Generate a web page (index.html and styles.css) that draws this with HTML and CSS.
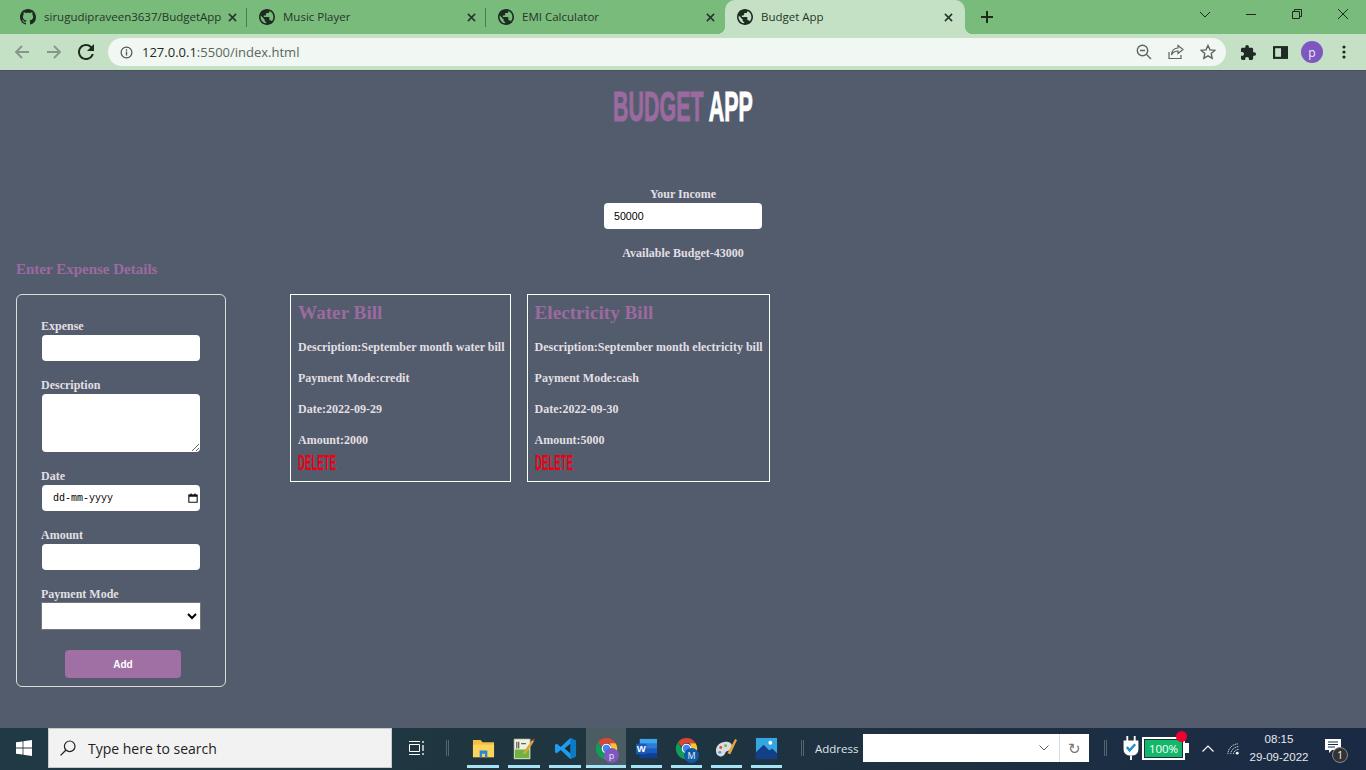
FILE: index.html
```html
<!DOCTYPE html>
<html lang="en">
<head>
  <meta charset="UTF-8" />
  <title>Budget App</title>
  <link rel="stylesheet" href="styles.css">
</head>
<body>
  <svg class="defs" width="0" height="0">
    <symbol id="globe" viewBox="2 2 20 20"><path d="M12 2C6.48 2 2 6.48 2 12s4.48 10 10 10 10-4.48 10-10S17.52 2 12 2zm-1 17.93c-3.95-.49-7-3.85-7-7.93 0-.62.08-1.21.21-1.79L9 15v1c0 1.1.9 2 2 2v1.93zm6.9-2.54c-.26-.81-1-1.39-1.9-1.39h-1v-3c0-.55-.45-1-1-1H8v-2h2c.55 0 1-.45 1-1V7h2c1.1 0 2-.9 2-2v-.41c2.93 1.19 5 4.06 5 7.41 0 2.08-.8 3.97-2.1 5.39z"/></symbol>
    <symbol id="close" viewBox="0 0 10 10"><path d="M1 1l8 8M9 1L1 9" stroke="#26352a" stroke-width="1.7" fill="none"/></symbol>
    <symbol id="chrome" viewBox="0 0 24 24">
      <path d="M12 1a11 11 0 0 1 9.53 5.5H12a5.5 5.5 0 0 0-5.2 3.7L3.2 5.3A11 11 0 0 1 12 1z" fill="#db4437"/>
      <path d="M3.2 5.3l4.6 8a5.5 5.5 0 0 0 5.7 4l-3.7 5.6A11 11 0 0 1 3.2 5.3z" fill="#0f9d58"/>
      <path d="M21.53 6.5A11 11 0 0 1 9.8 22.9l4.7-8.1a5.5 5.5 0 0 0 .6-8.3z" fill="#fbc02d"/>
      <circle cx="12" cy="12" r="4.4" fill="#4285f4" stroke="#fff" stroke-width="1.2"/>
    </symbol>
  </svg>

  <header class="tabstrip">
    <div class="tab">
      <svg class="tab-icon" viewBox="0 0 16 16"><path d="M8 0C3.58 0 0 3.58 0 8c0 3.54 2.29 6.53 5.47 7.59.4.07.55-.17.55-.38 0-.19-.01-.82-.01-1.49-2.01.37-2.53-.49-2.69-.94-.09-.23-.48-.94-.82-1.13-.28-.15-.68-.52-.01-.53.63-.01 1.08.58 1.23.82.72 1.21 1.87.87 2.33.66.07-.52.28-.87.51-1.07-1.78-.2-3.64-.89-3.64-3.95 0-.87.31-1.59.82-2.15-.08-.2-.36-1.02.08-2.12 0 0 .67-.21 2.2.82.64-.18 1.32-.27 2-.27.68 0 1.36.09 2 .27 1.53-1.04 2.2-.82 2.2-.82.44 1.1.16 1.92.08 2.12.51.56.82 1.27.82 2.15 0 3.07-1.87 3.75-3.65 3.95.29.25.54.73.54 1.48 0 1.07-.01 1.93-.01 2.2 0 .21.15.46.55.38A8.013 8.013 0 0016 8c0-4.42-3.58-8-8-8z"/></svg>
      <span class="tab-title">sirugudipraveen3637/BudgetApp</span>
      <svg class="tab-close"><use href="#close"/></svg>
    </div>
    <div class="tab">
      <svg class="tab-icon"><use href="#globe"/></svg>
      <span class="tab-title">Music Player</span>
      <svg class="tab-close"><use href="#close"/></svg>
    </div>
    <div class="tab tab-last">
      <svg class="tab-icon"><use href="#globe"/></svg>
      <span class="tab-title">EMI Calculator</span>
      <svg class="tab-close"><use href="#close"/></svg>
    </div>
    <div class="tab tab-active">
      <svg class="tab-icon"><use href="#globe"/></svg>
      <span class="tab-title">Budget App</span>
      <svg class="tab-close"><use href="#close"/></svg>
    </div>
    <svg class="new-tab" viewBox="0 0 12 12"><path d="M6 0v12M0 6h12" stroke="#1d2a20" stroke-width="2"/></svg>
    <div class="window-controls">
      <svg viewBox="0 0 46 16"><path d="M18 6l5 5 5-5" stroke="#1d2a20" fill="none"/></svg>
      <svg viewBox="0 0 46 16"><path d="M18 8.500h10" stroke="#1d2a20"/></svg>
      <svg viewBox="0 0 46 16"><path d="M18.500 5.500h7v7h-7zM20.500 5.500v-2h7v7h-2" stroke="#1d2a20" fill="none"/></svg>
      <svg viewBox="0 0 46 16"><path d="M18 3l10 10M28 3L18 13" stroke="#1d2a20" fill="none"/></svg>
    </div>
  </header>

  <nav class="toolbar">
    <svg class="tool" viewBox="0 0 16 16"><path d="M15 8H2M8 2L2 8l6 6" stroke="#86948a" stroke-width="1.8" fill="none"/></svg>
    <svg class="tool" viewBox="0 0 16 16"><path d="M1 8h13M8 2l6 6-6 6" stroke="#86948a" stroke-width="1.8" fill="none"/></svg>
    <svg class="tool tool-reload" viewBox="4 4 16 16"><path d="M17.65 6.35A7.958 7.958 0 0012 4c-4.42 0-7.99 3.58-7.99 8s3.57 8 7.99 8c3.73 0 6.84-2.55 7.73-6h-2.08A5.99 5.99 0 0112 18c-3.31 0-6-2.69-6-6s2.69-6 6-6c1.66 0 3.14.69 4.22 1.78L13 11h7V4l-2.35 2.35z" fill="#1f2a22"/></svg>
    <div class="omnibox">
      <svg class="info" viewBox="0 0 14 14"><circle cx="7" cy="7" r="5.8" stroke="#4c5650" stroke-width="1.3" fill="none"/><path d="M7 6v4.2M7 3.6v1.4" stroke="#4c5650" stroke-width="1.4"/></svg>
      <span class="url"><span class="url-host">127.0.0.1</span>:5500/index.html</span>
      <svg class="omni-icon" viewBox="0 0 16 16"><circle cx="6.5" cy="6.5" r="5.2" stroke="#5c6660" stroke-width="1.4" fill="none"/><path d="M4 6.5h5M10.5 10.5l4.5 4.5" stroke="#5c6660" stroke-width="1.4"/></svg>
      <svg class="omni-icon" viewBox="0 0 16 16"><path d="M1 8v6.5h12V11" stroke="#5c6660" stroke-width="1.2" fill="none"/><path d="M10 1.5l5 4-5 4V7C7 7 5 8 3.5 11 3.8 7 6 4 10 4z" stroke="#5c6660" stroke-width="1.2" fill="none"/></svg>
      <svg class="omni-icon" viewBox="0 0 16 16"><path d="M8 1.5l2 4.4 4.8.5-3.6 3.2 1 4.7L8 11.900l-4.200 2.400 1-4.700L1.200 6.400l4.800-.5z" stroke="#5c6660" stroke-width="1.4" fill="none"/></svg>
    </div>
    <svg class="tool-right" viewBox="2 1 21 21"><path d="M20.500 11H19V7c0-1.100-.900-2-2-2h-4V3.500C13 2.120 11.880 1 10.500 1S8 2.120 8 3.500V5H4c-1.100 0-1.990.900-1.990 2v3.800H3.500c1.490 0 2.700 1.210 2.700 2.700s-1.210 2.700-2.700 2.700H2V20c0 1.100.900 2 2 2h3.800v-1.500c0-1.490 1.210-2.700 2.700-2.700 1.490 0 2.700 1.210 2.700 2.700V22H17c1.100 0 2-.900 2-2v-4h1.500c1.380 0 2.500-1.120 2.500-2.500S21.880 11 20.500 11z" fill="#1f2a22"/></svg>
    <svg class="tool-side" viewBox="0 0 14 12"><path d="M0 0h14v12H0z" fill="#1f2a22"/><path d="M2 2h5.500v8H2z" fill="#c5e1c5"/></svg>
    <div class="avatar">p</div>
    <svg class="menu-dots" viewBox="0 0 4 14"><circle cx="2" cy="2" r="1.600"/><circle cx="2" cy="7" r="1.600"/><circle cx="2" cy="12" r="1.600"/></svg>
  </nav>

  <main class="page">
    <h1 class="app-title"><span class="app-title-text"><span class="accent">BUDGET</span> APP</span></h1>

    <section class="income">
      <label class="income-label" for="income">Your Income</label>
      <input class="field" id="income" type="text" value="50000" />
      <p class="available">Available Budget-43000</p>
    </section>

    <section class="content">
      <h4 class="form-heading">Enter Expense Details</h4>
      <form class="expense-form">
        <label for="expense">Expense</label>
        <input class="field" id="expense" type="text" />
        <label for="description">Description</label>
        <textarea class="field field-area" id="description"></textarea>
        <label>Date</label>
        <div class="field field-date">
          <span>dd-mm-yyyy</span>
          <svg class="calendar" viewBox="0 0 12 12"><path d="M1 2.500h10v8.500H1z" fill="none" stroke="#111" stroke-width="1.300"/><path d="M1 2h10v2.500H1zM3 .5h1.500v2H3zM7.500 .5H9v2H7.500z" fill="#111"/></svg>
        </div>
        <label for="amount">Amount</label>
        <input class="field" id="amount" type="text" />
        <label class="label-mode" for="mode">Payment Mode</label>
        <select class="mode" id="mode"><option></option></select>
        <button class="add-btn" type="button">Add</button>
      </form>

      <div class="cards">
        <article class="card">
          <h3>Water Bill</h3>
          <p>Description:September month water bill</p>
          <p>Payment Mode:credit</p>
          <p>Date:2022-09-29</p>
          <p>Amount:2000</p>
          <a class="delete"><span>DELETE</span></a>
        </article>
        <article class="card">
          <h3>Electricity Bill</h3>
          <p>Description:September month electricity bill</p>
          <p>Payment Mode:cash</p>
          <p>Date:2022-09-30</p>
          <p>Amount:5000</p>
          <a class="delete"><span>DELETE</span></a>
        </article>
      </div>
    </section>
  </main>

  <footer class="taskbar">
    <svg class="start" viewBox="0 0 16 16"><path d="M0 2.300l6.600-.9v6.200H0zM7.400 1.300L16 0v7.600H7.400zM0 8.400h6.600v6.200L0 13.700zM7.400 8.400H16V16l-8.600-1.300z" fill="#fff"/></svg>
    <div class="search">
      <svg class="search-icon" viewBox="0 0 16 16"><circle cx="9.700" cy="6.300" r="5.300" fill="none" stroke="#222" stroke-width="1.200"/><path d="M6 10L.6 15.400" stroke="#222" stroke-width="1.300"/></svg>
      <span>Type here to search</span>
    </div>
    <svg class="task-view" viewBox="0 0 16 16"><path d="M1 1.500h11M1 14.500h11M1.500 4.500h10v7h-10z" stroke="#fff" fill="none"/><path d="M15 1v2M15 5v6M15 13v2" stroke="#fff" stroke-width="1.300"/></svg>
    <span class="sep sep-first"></span>

    <div class="apps">
      <div class="app">
        <svg viewBox="0 0 24 24"><path d="M1 3h8l2 2.500h12V21H1z" fill="#f3c042"/><path d="M1 8h22v13H1z" fill="#fbd55c"/><path d="M8 14h8v7h-2.500v-3.500h-3V21H8z" fill="#2b88d8"/></svg>
      </div>
      <div class="app">
        <svg viewBox="0 0 24 24"><path d="M1 2h17v21H1z" fill="#eef0df" stroke="#8a8a7a" stroke-width=".6"/><path d="M2 13h15v9H2z" fill="#6cb33f"/><path d="M4 5v7M6 5v7M8.500 7h5" stroke="#333" stroke-width="1"/><path d="M10 17L20 3l2 1.500L13 18z" fill="#d9a63c"/><path d="M20 3l2 1.500 .8-2-1.500-1z" fill="#c0392b"/></svg>
      </div>
      <div class="app">
        <svg viewBox="0 0 24 24"><path d="M17 1l6 3v16l-6 3L7 13.500 3 17l-2-1.200v-7.600L3 7l4 3.500z" fill="#1f9cf0"/><path d="M17 1l6 3v16l-6 3z" fill="#0e7ac4"/><path d="M17 7v10l-6-5z" fill="#1c2c36"/></svg>
      </div>
      <div class="app app-open">
        <svg viewBox="0 0 24 24"><use href="#chrome"/></svg>
        <span class="app-badge badge-p">p</span>
      </div>
      <div class="app">
        <svg viewBox="0 0 24 24"><path d="M5 2h18v20H5z" fill="#185abd"/><path d="M5 2h18v5H5z" fill="#41a5ee"/><path d="M5 7h18v5H5z" fill="#2b7cd3"/><path d="M5 17h18v5H5z" fill="#103f91"/><path d="M1 7h11v11H1z" fill="#1a5ab8"/><text x="6.500" y="16" class="word-letter">W</text></svg>
      </div>
      <div class="app">
        <svg viewBox="0 0 24 24"><use href="#chrome"/></svg>
        <span class="app-badge badge-m">M</span>
      </div>
      <div class="app">
        <svg viewBox="0 0 24 24"><path d="M1 14c0-6 6-10 12-9 5 1 6 5 3 8-2 2-4 1-5 3-1 3-3 5-6 4-3-.5-4-3-4-6z" fill="#d8dde0"/><circle cx="6" cy="11" r="1.500" fill="#e44"/><circle cx="11" cy="9" r="1.500" fill="#6b4"/><circle cx="5" cy="16" r="1.500" fill="#49d"/><path d="M13 17L21 2l2 1-7 15z" fill="#e8a33d"/></svg>
      </div>
      <div class="app">
        <svg viewBox="0 0 24 24"><path d="M1 1h22v22H1z" fill="#35a7e0"/><path d="M1 16l8-8 6 6 3-2 5 5v6H1z" fill="#123f86"/><circle cx="16" cy="6" r="2" fill="#fff"/></svg>
      </div>
    </div>

    <span class="sep sep-address"></span>
    <span class="address-label">Address</span>
    <div class="address-box">
      <svg class="address-chevron" viewBox="0 0 10 6"><path d="M.5.5L5 5 9.500.5" stroke="#555" fill="none"/></svg>
      <span class="address-go">&#8635;</span>
    </div>
    <span class="sep sep-tray"></span>

    <svg class="plug" viewBox="0 0 16 28"><path d="M4 1v6M12 1v6" stroke="#fff" stroke-width="2"/><path d="M0 6h16v9c0 5-3 7-8 7s-8-2-8-7z" fill="#fff"/><path d="M8 22v5" stroke="#fff" stroke-width="2"/><path d="M3.500 13l3 3.500 6-6.500" stroke="#1e8fd5" stroke-width="2.600" fill="none"/></svg>
    <div class="battery">
      <span class="battery-level">100%</span>
      <span class="battery-dot"></span>
    </div>
    <span class="battery-cap"></span>
    <svg class="tray-up" viewBox="0 0 12 7"><path d="M.5 6.500L6 1l5.500 5.500" stroke="#fff" stroke-width="1.200" fill="none"/></svg>
    <svg class="wifi" viewBox="0 0 14 14"><path d="M1 13C1 7 6 2 12.500 2M4 13c0-4 4-8 8.500-8M7 13c0-2.500 2.500-5 5.500-5" stroke="#cfd6dc" stroke-width="1" fill="none" stroke-dasharray="1.500 .7"/><circle cx="11" cy="12" r="1.500" fill="#fff"/></svg>
    <div class="clock"><span>08:15</span><span>29-09-2022</span></div>
    <div class="notify">
      <svg viewBox="0 0 16 15"><path d="M0 0h16v11H7l-3 3v-3H0z" fill="#fff"/><path d="M3 3h10M3 5.500h10M3 8h7" stroke="#1a2a44"/></svg>
      <span class="notify-count">1</span>
    </div>
  </footer>
</body>
</html>
```

FILE: styles.css
```css
* {
  box-sizing: border-box;
}

html, body {
  height: 100%;
}

body {
  margin: 0;
  display: flex;
  flex-direction: column;
  overflow: hidden;
  background-color: #535c6d;
  font-family: "Liberation Serif", serif;
}

.defs {
  display: none;
}

/* browser tabs */
.tabstrip {
  display: flex;
  align-items: flex-start;
  height: 34px;
  flex: none;
  padding-left: 8px;
  background-color: #78bb7b;
  font-family: "Open Sans", "Noto Sans", sans-serif;
}

.tab {
  display: flex;
  align-items: center;
  width: 239px;
  height: 34px;
  padding: 0 8px 0 12px;
  color: #26352a;
  font-size: 11.5px;
  position: relative;
}

.tab::after {
  content: "";
  position: absolute;
  right: 0;
  top: 8px;
  width: 1px;
  height: 19px;
  background-color: #4c7a50;
}

.tab-last::after {
  content: none;
}

.tab-active {
  width: 240px;
  padding-right: 10px;
  border-radius: 10px 10px 0 0;
  background-color: #c5e1c5;
}

/* the little flares either side of the active tab */
.tab-active::before, .tab-active::after {
  content: "";
  position: absolute;
  top: auto;
  bottom: 0;
  width: 8px;
  height: 8px;
}

.tab-active::before {
  left: -8px;
  background: radial-gradient(circle at 0 0, transparent 8px, #c5e1c5 8px);
}

.tab-active::after {
  right: -8px;
  background: radial-gradient(circle at 100% 0, transparent 8px, #c5e1c5 8px);
}

.tab-icon {
  width: 16px;
  height: 16px;
  flex: none;
  fill: #1f2a22;
}

.tab-title {
  flex: 1;
  margin-left: 8px;
  padding-bottom: 2px;
  white-space: nowrap;
}

.tab-close {
  width: 9px;
  height: 9px;
  flex: none;
  margin-right: 2px;
}

.new-tab {
  width: 12px;
  height: 12px;
  margin: 11px 0 0 16px;
}

.window-controls {
  display: flex;
  margin-left: auto;
  margin-top: 6px;
}

.window-controls svg {
  width: 46px;
  height: 16px;
}

/* address row */
.toolbar {
  display: flex;
  align-items: center;
  height: 37px;
  flex: none;
  padding-left: 14px;
  border-bottom: 1px solid #47505f;
  background-color: #c5e1c5;
}

.tool {
  width: 16px;
  height: 16px;
  margin-right: 16px;
  flex: none;
}

.tool-reload {
  margin-right: 14px;
}

.omnibox {
  display: flex;
  align-items: center;
  width: 1118px;
  height: 28px;
  padding: 0 10px 0 12px;
  border-radius: 14px;
  background-color: #f1f7f2;
  flex: none;
}

.info {
  width: 13px;
  height: 13px;
  flex: none;
}

.url {
  margin-left: 9px;
  flex: 1;
  color: #5b6660;
  font-family: "Open Sans", "Noto Sans", sans-serif;
  font-size: 13px;
}

.url-host {
  color: #1f2a22;
}

.omni-icon {
  width: 16px;
  height: 16px;
  margin-left: 16px;
  flex: none;
}

.tool-right {
  width: 15px;
  height: 15px;
  margin-left: 15px;
  flex: none;
}

.tool-side {
  width: 15px;
  height: 15px;
  margin-left: 17px;
  flex: none;
}

.avatar {
  display: flex;
  align-items: center;
  justify-content: center;
  width: 22px;
  height: 22px;
  margin-left: 13px;
  border-radius: 50%;
  background-color: #7e57c2;
  color: #eee;
  font-family: "Open Sans", sans-serif;
  font-size: 12px;
}

.menu-dots {
  width: 4px;
  height: 14px;
  margin-left: 19px;
  fill: #1f2a22;
}

/* the budget page */
.page {
  flex: 1;
  min-height: 0;
  color: #e2dfe2;
}

.app-title {
  margin: 18px 0 0;
  height: 36px;
  line-height: 36px;
  text-align: center;
  color: #fff;
  font-family: "Liberation Sans", sans-serif;
  font-size: 42px;
  font-weight: bold;
  white-space: nowrap;
}

.app-title-text {
  display: inline-block;
  transform: scaleX(0.51);
  -webkit-text-stroke: 1px currentColor;
}

.accent {
  color: #9b6a9f;
}

.income {
  display: flex;
  flex-direction: column;
  align-items: center;
  margin-top: 62px;
}

.income-label, .expense-form label {
  display: block;
  font-size: 12px;
  font-weight: bold;
  line-height: 14px;
}

.income-label {
  margin-bottom: 2px;
}

.available {
  margin: 17px 0 0;
  font-size: 12px;
  font-weight: bold;
  line-height: 14px;
}

.field {
  display: block;
  width: 158px;
  height: 26px;
  padding: 0 10px;
  border: none;
  border-radius: 4px;
  background-color: #fff;
  color: #000;
  font-family: "Liberation Sans", sans-serif;
  font-size: 10.67px;
}

.content {
  display: grid;
  grid-template-columns: 210px auto;
  column-gap: 64px;
  justify-content: start;
  margin: 2px 0 0 16px;
}

.form-heading {
  grid-column: 1 / 3;
  margin: 0 0 18px;
  color: #9b6a9f;
  font-size: 15px;
  font-weight: bold;
  line-height: 14px;
}

.expense-form {
  height: 393px;
  padding: 24px 24px 0;
  border: 1px solid #dcdcdc;
  border-radius: 6px;
}

.expense-form label {
  margin-bottom: 2px;
}

.expense-form .field {
  margin: 0 0 17px 1px;
}

.expense-form .field-area {
  height: 58px;
  padding: 4px;
}

.field-date {
  display: flex;
  align-items: center;
  justify-content: space-between;
  padding: 0 2px 0 11px;
  font-family: "Liberation Mono", monospace;
  font-size: 10px;
}

.calendar {
  width: 10px;
  height: 10px;
}

.expense-form .label-mode {
  margin-bottom: 1px;
}

.mode {
  display: block;
  width: 160px;
  height: 28px;
  border: 1px solid #767676;
  border-radius: 0;
  background-color: #fff;
}

.add-btn {
  display: block;
  width: 116px;
  height: 28px;
  margin: 20px 0 0 24px;
  border: none;
  border-radius: 4px;
  background-color: #a06fa3;
  color: #fff;
  font-family: "Liberation Sans", sans-serif;
  font-size: 10px;
  font-weight: bold;
}

.cards {
  display: flex;
  align-items: flex-start;
  gap: 16px;
}

.card {
  height: 188px;
  padding: 7px 5px 0 7px;
  border: 1px solid #fff;
  font-size: 12px;
  font-weight: bold;
}

.card + .card {
  padding-right: 6px;
}

.card h3 {
  margin: 0;
  color: #9b6a9f;
  font-size: 19.2px;
  line-height: 21px;
}

.card p {
  margin: 17px 0 0;
  line-height: 14px;
  white-space: nowrap;
}

.delete {
  display: block;
  margin-top: 7px;
  height: 18px;
  line-height: 18px;
  color: #ee0011;
  font-family: "Liberation Sans", sans-serif;
  font-size: 22px;
  font-weight: bold;
  white-space: nowrap;
}

.delete span {
  display: inline-block;
  transform: scaleX(0.44);
  transform-origin: left center;
}

/* windows taskbar */
.taskbar {
  display: flex;
  align-items: center;
  height: 42px;
  flex: none;
  padding-bottom: 2px;
  background: linear-gradient(90deg, #1f3a44 0%, #1f3540 45%, #1a2a44 100%);
  color: #fff;
  font-family: "Open Sans", "Noto Sans", sans-serif;
}

.start {
  width: 16px;
  height: 16px;
  margin: 0 16px;
  flex: none;
}

.search {
  display: flex;
  align-items: center;
  width: 344px;
  height: 40px;
  flex: none;
  padding-left: 11px;
  border: 1px solid #c9c9c9;
  background-color: #f2f2f2;
  color: #222;
  font-size: 14px;
}

.search-icon {
  width: 16px;
  height: 16px;
  margin-right: 12px;
}

.task-view {
  width: 16px;
  height: 16px;
  margin-left: 16px;
  flex: none;
}

.sep {
  width: 3px;
  height: 16px;
  flex: none;
  border-left: 1px solid #55656e;
  border-right: 1px solid #55656e;
}

.sep-first {
  margin-left: 22px;
}

.apps {
  display: flex;
  gap: 9px;
  margin-left: 18px;
  align-self: stretch;
  flex: none;
}

.app {
  display: flex;
  align-items: center;
  justify-content: center;
  width: 32px;
  position: relative;
}

.app svg {
  width: 23px;
  height: 23px;
}

.app::after {
  content: "";
  position: absolute;
  left: 0;
  right: 0;
  bottom: 0;
  height: 3px;
  background-color: #a5e3f5;
}

.app-open {
  width: 40px;
  margin: 0 -4px;
  background-color: #4b5c62;
}

.app-open ~ .app {
  width: 31px;
}

.app-badge {
  position: absolute;
  display: flex;
  align-items: center;
  justify-content: center;
  top: 20px;
  width: 15px;
  height: 15px;
  border-radius: 50%;
  font-size: 9px;
  color: #eee;
}

.badge-p {
  left: 18px;
  background-color: #7e57c2;
}

.badge-m {
  left: 13px;
  background-color: #0f5aa8;
}

.word-letter {
  fill: #fff;
  font-family: "Liberation Sans", sans-serif;
  font-size: 10px;
  font-weight: bold;
  text-anchor: middle;
}

.sep-address {
  margin-left: 19px;
}

.address-label {
  margin-left: 11px;
  color: #dfe4e6;
  font-size: 11.5px;
  width: 48px;
  flex: none;
}

.address-box {
  display: flex;
  align-items: center;
  justify-content: flex-end;
  width: 226px;
  height: 28px;
  flex: none;
  background-color: #fff;
}

.address-chevron {
  width: 10px;
  height: 6px;
  margin-right: 10px;
}

.address-go {
  width: 30px;
  height: 28px;
  border-left: 1px solid #ddd;
  color: #777;
  font-size: 15px;
  line-height: 28px;
  text-align: center;
}

.sep-tray {
  margin-left: 15px;
}

.plug {
  width: 16px;
  height: 26px;
  margin-left: 16px;
  flex: none;
}

.battery {
  position: relative;
  width: 43px;
  height: 23px;
  margin-left: 3px;
  flex: none;
  padding: 1px;
  border: 2px solid #fff;
}

.battery-level {
  display: block;
  height: 17px;
  background-color: #12b76a;
  color: #fff;
  font-size: 11.5px;
  line-height: 17px;
  text-align: center;
}

.battery-dot {
  position: absolute;
  top: -8px;
  right: -4px;
  width: 11px;
  height: 11px;
  border-radius: 50%;
  background-color: #f0002e;
}

.battery-cap {
  width: 4px;
  height: 10px;
  flex: none;
  background-color: #fff;
}

.tray-up {
  width: 12px;
  height: 7px;
  margin-left: 13px;
  flex: none;
}

.wifi {
  width: 13px;
  height: 13px;
  margin-left: 13px;
  flex: none;
}

.clock {
  display: flex;
  flex-direction: column;
  align-items: center;
  width: 58px;
  margin-left: 10px;
  flex: none;
  color: #e6e9ec;
  font-family: "Liberation Sans", sans-serif;
  font-size: 11.5px;
  line-height: 18px;
  white-space: nowrap;
}

.notify {
  position: relative;
  width: 24px;
  height: 24px;
  margin: 6px 0 0 17px;
  flex: none;
}

.notify svg {
  display: block;
  width: 16px;
  height: 15px;
}

.notify-count {
  position: absolute;
  left: 7px;
  top: 8px;
  width: 16px;
  height: 16px;
  border: 1px solid #888;
  border-radius: 50%;
  background-color: #333;
  font-size: 10px;
  line-height: 14px;
  text-align: center;
}
```
